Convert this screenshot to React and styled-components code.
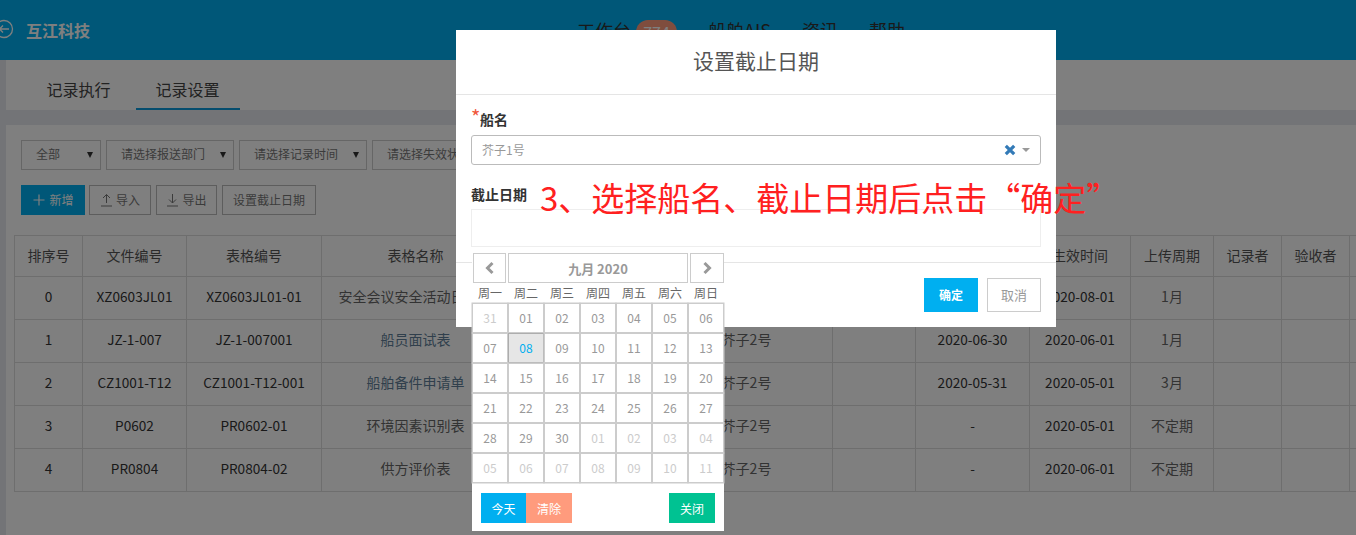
import { createGlobalStyle } from 'styled-components'
import styled from 'styled-components'

const GlobalStyle = createGlobalStyle`
  html, body {
    margin: 0;
    padding: 0;
    height: 100%;
    overflow: hidden;
    background: #e6e8ee;
  }
  * {
    box-sizing: border-box;
  }
  body {
    font-family: 'Noto Sans CJK SC', 'Liberation Sans', sans-serif;
    font-size: 13px;
    color: #333;
  }
`

const Page = styled.div`
  position: relative;
  width: 1356px;
  height: 535px;
  overflow: hidden;
`

const TopBar = styled.header`
  height: 60px;
  background: #00aff0;
  display: flex;
  align-items: center;
  padding-left: 26px;
  position: relative;
`

const Logo = styled.div`
  color: #fff;
  font-size: 16px;
  font-weight: 700;
  width: 551px;
  padding-bottom: 1px;
`

const BackIcon = styled.svg`
  position: absolute;
  left: -6px;
  top: 19px;
`

const TopNav = styled.nav`
  display: flex;
  align-items: center;
  color: #333;
  font-size: 18px;
`

const NavItem = styled.span`
  margin-right: ${({ gap }) => gap}px;
`

const NavBadge = styled.span`
  width: 41px;
  height: 24px;
  border-radius: 12px;
  background: #ff9b7d;
  color: #fff;
  font-size: 16px;
  text-align: center;
  line-height: 24px;
  margin: 4px 31px 0 5px;
`

const Body = styled.div`
  padding-left: 6px;
`

const TabCard = styled.div`
  height: 50px;
  background: #fff;
  display: flex;
  padding-left: 26px;
`

const Tab = styled.div`
  width: 104px;
  height: 50px;
  font-size: 16px;
  line-height: 58px;
  text-align: center;
  text-indent: -1px;
  color: #444;
  margin-left: ${({ active }) => (active ? '5px' : '-5px')};
  border-bottom: 2px solid ${({ active }) => (active ? '#0a9bdc' : 'transparent')};
`

const MainCard = styled.div`
  margin-top: 15px;
  height: 410px;
  background: #fff;
  padding: 15px 0 0 8px;
  overflow: hidden;
`

const FilterRow = styled.div`
  display: flex;
  gap: 5px;
  padding-left: 7px;
`

const FilterBox = styled.div`
  width: ${({ w }) => w}px;
  height: 30px;
  border: 1px solid #ccc;
  flex: none;
  display: flex;
  align-items: center;
  justify-content: space-between;
  padding: 0 7px 3px 14px;
  font-size: 12px;
  color: #777;
`

const Caret = styled.span`
  width: 0;
  height: 0;
  margin-top: 3px;
  border-left: 3px solid transparent;
  border-right: 3px solid transparent;
  border-top: 6px solid #333;
`

const ButtonRow = styled.div`
  display: flex;
  margin: 15px 0 20px 7px;
`

const ToolButton = styled.div`
  width: ${({ w }) => w}px;
  height: 30px;
  margin-right: ${({ gap }) => gap}px;
  border: 1px solid ${({ primary }) => (primary ? '#00aff0' : '#bbb')};
  background: ${({ primary }) => (primary ? '#00aff0' : '#fff')};
  color: ${({ primary }) => (primary ? '#fff' : '#777')};
  display: flex;
  align-items: center;
  justify-content: center;
  gap: 3px;
  padding-bottom: 1px;
  font-size: 12px;
`

const DataTable = styled.table`
  border-collapse: collapse;
  table-layout: fixed;
  width: 1345px;
  text-align: center;
  font-size: 13.6px;
  color: #333;
  th, td {
    border: 1px solid #ddd;
    padding: 0 0 5px;
    white-space: nowrap;
    overflow: hidden;
  }
  th {
    height: 41px;
    font-size: 14px;
    font-weight: 400;
    color: #555;
    padding-bottom: 2px;
  }
  td {
    height: 43px;
  }
`

const NameCell = styled.td`
  color: ${({ link }) => (link ? '#607f99' : '#666')};
  font-size: 14px;
`

const Overlay = styled.div`
  position: absolute;
  inset: 0;
  background: rgba(0, 0, 0, 0.5);
`

const Modal = styled.div`
  position: absolute;
  left: 456px;
  top: 30px;
  width: 600px;
  height: 297px;
  background: #fff;
`

const ModalTitle = styled.div`
  height: 65px;
  border-bottom: 1px solid #e5e5e5;
  text-align: center;
  font-size: 21px;
  line-height: 60px;
  color: #555;
`

const ModalBody = styled.div`
  height: 168px;
  padding: 14px 15px 0;
  border-bottom: 1px solid #e5e5e5;
`

const FieldLabel = styled.div`
  font-size: 14px;
  font-weight: 700;
  color: #333;
  line-height: 20px;
  margin-bottom: ${({ gap }) => gap}px;
`

const Star = styled.span`
  display: inline-block;
  width: 9px;
  color: #f0573c;
  font-size: 20px;
  font-weight: 400;
  line-height: 14px;
`

const SelectBox = styled.div`
  height: 30px;
  border: 1px solid #bbb;
  border-radius: 3px;
  display: flex;
  align-items: center;
  padding: 0 10px 1px;
  font-size: 12px;
  color: #999;
  margin-bottom: 19px;
`

const SelectValue = styled.span`
  flex: 1;
`

const ClearIcon = styled.svg`
  margin-right: 6px;
`

const SelectCaret = styled.span`
  width: 0;
  height: 0;
  border-left: 4px solid transparent;
  border-right: 4px solid transparent;
  border-top: 4px solid #999;
`

const DateInput = styled.div`
  height: 38px;
  margin-top: 1px;
  border: 1px solid #eee;
`

const ModalFooter = styled.div`
  height: 63px;
  display: flex;
  justify-content: flex-end;
  align-items: flex-start;
  padding: 15px 15px 0 0;
  gap: 9px;
`

const ConfirmButton = styled.div`
  width: 54px;
  height: 34px;
  background: #00aff0;
  color: #fff;
  font-size: 12px;
  font-weight: 700;
  display: flex;
  align-items: center;
  justify-content: center;
  padding-bottom: 1px;
`

const CancelButton = styled.div`
  width: 54px;
  height: 34px;
  border: 1px solid #ccc;
  color: #999;
  font-size: 13px;
  display: flex;
  align-items: center;
  justify-content: center;
  padding-bottom: 1px;
`

const Hint = styled.div`
  position: absolute;
  left: 540px;
  top: 173px;
  font-size: 33px;
  font-weight: 400;
  line-height: 48px;
  color: #ff2020;
  white-space: nowrap;
`

const Calendar = styled.div`
  position: absolute;
  left: 472px;
  top: 247px;
  width: 252px;
  height: 284px;
  background: #fff;
  padding-top: 6px;
`

const CalendarHead = styled.div`
  display: flex;
  height: 30px;
  gap: 2px;
  padding: 0 0 0 1px;
`

const MonthCell = styled.div`
  width: ${({ w }) => w}px;
  border: 1px solid #ccc;
  display: flex;
  align-items: center;
  justify-content: center;
  font-size: 13px;
  font-weight: 700;
  color: #999;
`

const WeekRow = styled.div`
  display: grid;
  grid-template-columns: repeat(7, 36px);
  height: 20px;
  text-align: center;
  font-size: 12px;
  line-height: 20px;
  color: #666;
`

const DayGrid = styled.div`
  display: grid;
  grid-template-columns: repeat(7, 36px);
  grid-auto-rows: 30px;
`

const DayCell = styled.div`
  border: 1px solid ${({ today }) => (today ? '#adadad' : '#ccc')};
  box-shadow: 0 0 0 0.5px #ccc;
  display: flex;
  align-items: center;
  justify-content: center;
  padding-bottom: 1px;
  font-size: 12px;
  color: ${({ muted, today }) => (today ? '#00aff0' : muted ? '#ccc' : '#999')};
  background: ${({ today }) => (today ? '#e6e6e6' : '#fff')};
`

const CalendarFooter = styled.div`
  display: flex;
  padding: 10px 9px 0;
`

const CalendarButton = styled.div`
  width: ${({ w }) => w}px;
  height: 30px;
  background: ${({ color }) => color};
  color: #fff;
  font-size: 12px;
  display: flex;
  align-items: center;
  justify-content: center;
  margin-left: ${({ push }) => (push ? 'auto' : '0')};
`

const Chevron = ({ left }) => (
  <svg width="12" height="14" viewBox="0 0 12 14">
    <path
      d={left ? 'M8.5 2 3.5 7l5 5' : 'M3.5 2l5 5-5 5'}
      fill="none"
      stroke="#999"
      strokeWidth="3"
    />
  </svg>
)

const UploadIcon = ({ down }) => (
  <svg width="13" height="14" viewBox="0 0 13 14">
    <path
      d={down ? 'M6.5 1v9M3 6.5l3.5 3.5L10 6.5M1 13h11' : 'M6.5 10V1.5M3 5l3.5-3.5L10 5M1 13h11'}
      fill="none"
      stroke="#777"
      strokeWidth="1"
    />
  </svg>
)

const widths = [68, 104, 135, 188, 151, 172, 83, 114, 101, 83, 68, 68, 10]

const rows = [
  ['0', 'XZ0603JL01', 'XZ0603JL01-01', '安全会议安全活动日志表', false, '', '2020-08-01', '1月'],
  ['1', 'JZ-1-007', 'JZ-1-007001', '船员面试表', true, '2020-06-30', '2020-06-01', '1月'],
  ['2', 'CZ1001-T12', 'CZ1001-T12-001', '船舶备件申请单', true, '2020-05-31', '2020-05-01', '3月'],
  ['3', 'P0602', 'PR0602-01', '环境因素识别表', false, '-', '2020-05-01', '不定期'],
  ['4', 'PR0804', 'PR0804-02', '供方评价表', false, '-', '2020-06-01', '不定期'],
]

const headers = ['排序号', '文件编号', '表格编号', '表格名称', '', '', '', '', '生效时间', '上传周期', '记录者', '验收者', '']

const weekDays = ['周一', '周二', '周三', '周四', '周五', '周六', '周日']

const days = [
  '31', '01', '02', '03', '04', '05', '06',
  '07', '08', '09', '10', '11', '12', '13',
  '14', '15', '16', '17', '18', '19', '20',
  '21', '22', '23', '24', '25', '26', '27',
  '28', '29', '30', '01', '02', '03', '04',
  '05', '06', '07', '08', '09', '10', '11',
]

const App = () => (
  <Page>
    <GlobalStyle />
    <TopBar>
      <BackIcon width="20" height="20" viewBox="0 0 20 20">
        <circle cx="10" cy="10" r="8.5" fill="none" stroke="#fff" strokeWidth="1.3" />
        <path d="M15 10H6M9 6.5 5.5 10 9 13.5" fill="none" stroke="#fff" strokeWidth="1.3" />
      </BackIcon>
      <Logo>互江科技</Logo>
      <TopNav>
        <NavItem gap={0}>工作台</NavItem>
        <NavBadge>774</NavBadge>
        <NavItem gap={31}>船舶AIS</NavItem>
        <NavItem gap={31}>资讯</NavItem>
        <NavItem gap={0}>帮助</NavItem>
      </TopNav>
    </TopBar>
    <Body>
      <TabCard>
        <Tab>记录执行</Tab>
        <Tab active>记录设置</Tab>
      </TabCard>
      <MainCard>
        <FilterRow>
          <FilterBox w={80}>全部<Caret /></FilterBox>
          <FilterBox w={128}>请选择报送部门<Caret /></FilterBox>
          <FilterBox w={128}>请选择记录时间<Caret /></FilterBox>
          <FilterBox w={128}>请选择失效状态<Caret /></FilterBox>
        </FilterRow>
        <ButtonRow>
          <ToolButton primary w={64} gap={4}>
            <svg width="14" height="14" viewBox="0 0 14 14">
              <path d="M7 1.5v11M1.5 7h11" stroke="#fff" strokeWidth="1.2" />
            </svg>
            新增
          </ToolButton>
          <ToolButton w={62} gap={5}><UploadIcon />导入</ToolButton>
          <ToolButton w={61} gap={5}><UploadIcon down />导出</ToolButton>
          <ToolButton w={94} gap={0}>设置截止日期</ToolButton>
        </ButtonRow>
        <DataTable>
          <colgroup>
            {widths.map((w, i) => <col key={i} width={w} />)}
          </colgroup>
          <thead>
            <tr>{headers.map((h, i) => <th key={i}>{h}</th>)}</tr>
          </thead>
          <tbody>
            {rows.map(r => (
              <tr key={r[0]}>
                <td>{r[0]}</td>
                <td>{r[1]}</td>
                <td>{r[2]}</td>
                <NameCell link={r[4]}>{r[3]}</NameCell>
                <td />
                <NameCell>芥子2号</NameCell>
                <td />
                <td>{r[5]}</td>
                <td>{r[6]}</td>
                <NameCell>{r[7]}</NameCell>
                <td />
                <td />
                <td />
              </tr>
            ))}
          </tbody>
        </DataTable>
      </MainCard>
    </Body>
    <Overlay />
    <Modal>
      <ModalTitle>设置截止日期</ModalTitle>
      <ModalBody>
        <FieldLabel gap={6}><Star>*</Star>船名</FieldLabel>
        <SelectBox>
          <SelectValue>芥子1号</SelectValue>
          <ClearIcon width="12" height="12" viewBox="0 0 12 12">
            <path d="M1.8 1.8l8.4 8.4M10.2 1.8l-8.4 8.4" stroke="#337ab7" strokeWidth="3.2" />
          </ClearIcon>
          <SelectCaret />
        </SelectBox>
        <FieldLabel gap={5}>截止日期</FieldLabel>
        <DateInput />
      </ModalBody>
      <ModalFooter>
        <ConfirmButton>确定</ConfirmButton>
        <CancelButton>取消</CancelButton>
      </ModalFooter>
    </Modal>
    <Hint>3、选择船名、截止日期后点击“确定”</Hint>
    <Calendar>
      <CalendarHead>
        <MonthCell w={33}><Chevron left /></MonthCell>
        <MonthCell w={180}>九月 2020</MonthCell>
        <MonthCell w={34}><Chevron /></MonthCell>
      </CalendarHead>
      <WeekRow>{weekDays.map(d => <span key={d}>{d}</span>)}</WeekRow>
      <DayGrid>
        {days.map((d, i) => (
          <DayCell key={i} muted={i === 0 || i > 30} today={i === 8}>{d}</DayCell>
        ))}
      </DayGrid>
      <CalendarFooter>
        <CalendarButton w={45} color="#00aff0">今天</CalendarButton>
        <CalendarButton w={46} color="#ff9b7d">清除</CalendarButton>
        <CalendarButton w={46} color="#00c292" push>关闭</CalendarButton>
      </CalendarFooter>
    </Calendar>
  </Page>
)

export default App
